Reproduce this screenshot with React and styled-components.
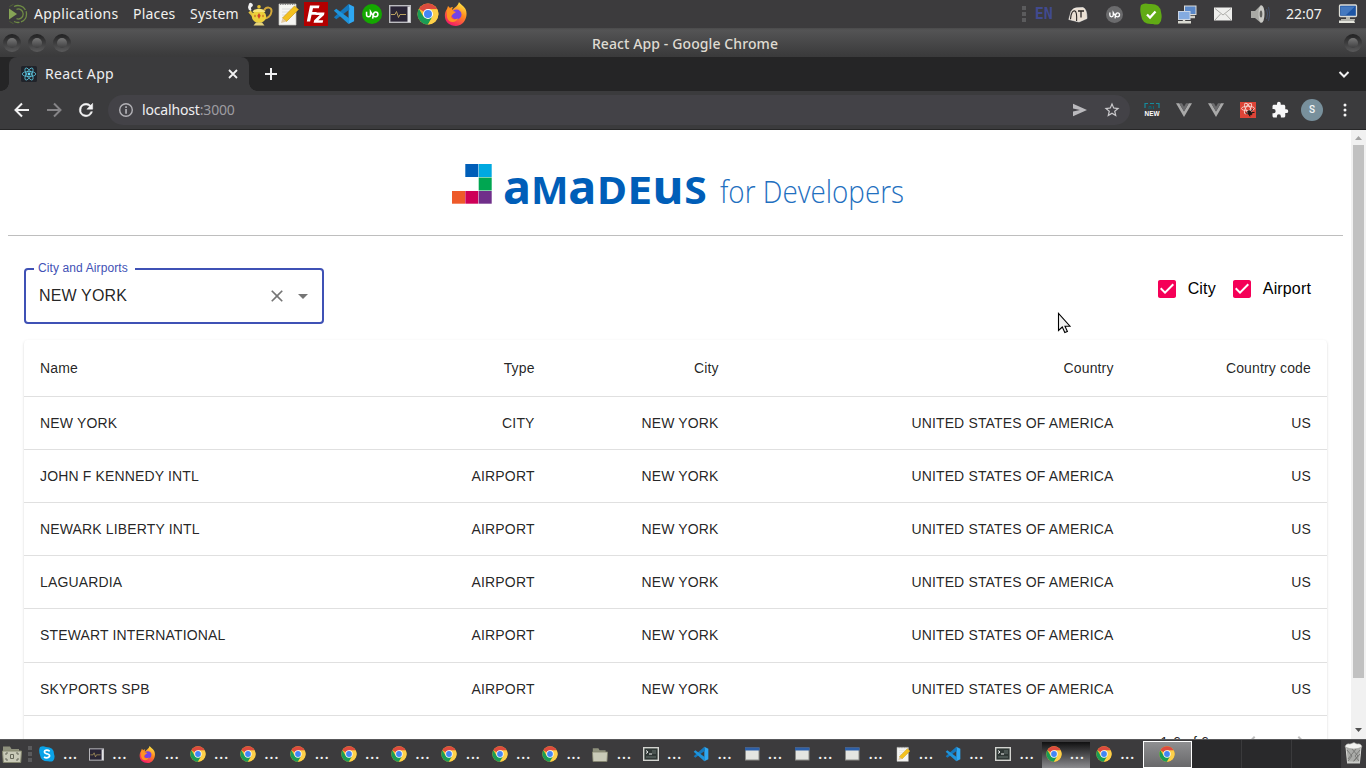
import React from "react";
import styled, { createGlobalStyle } from "styled-components";

const UI = `"Noto Sans", "Open Sans", sans-serif`;
const WEB = `"Liberation Sans", Arial, sans-serif`;

const GlobalStyle = createGlobalStyle`
  *, *::before, *::after { box-sizing: border-box; }
  html, body { margin: 0; padding: 0; overflow: hidden; }
  svg { display: block; flex: none; }
`;

const Desktop = styled.div`
  position: relative;
  width: 1366px;
  height: 768px;
  overflow: hidden;
  display: flex;
  flex-direction: column;
  background: #fff;
  font-family: ${UI};
`;

/* ---------- desktop panel ---------- */

const Panel = styled.header`
  height: 28px;
  flex: none;
  display: flex;
  align-items: center;
  background: #3c3b3d;
  color: #f2f1ef;
  padding-left: 6px;
`;

const MenuItem = styled.span`
  width: ${(p) => p.$w}px;
  font-size: 14px;
  line-height: 28px;
  letter-spacing: ${(p) => p.$ls || 0}px;
  white-space: nowrap;
`;

const MenuLogo = styled.div`
  width: 28px;
`;

const Cell = styled.div`
  width: ${(p) => p.$w || 28}px;
  height: 28px;
  flex: none;
  display: flex;
  align-items: center;
  justify-content: center;
`;

const Tray = styled.div`
  margin-left: auto;
  display: flex;
  align-items: center;
`;

const Lang = styled.span`
  width: 34px;
  padding-left: 9px;
  color: #414a8f;
  font: 700 15px/28px "DejaVu Sans Mono", monospace;
`;

const Clock = styled.span`
  width: 52px;
  padding-left: 8px;
  font-size: 14px;
  line-height: 28px;
  white-space: nowrap;
`;

/* ---------- browser window ---------- */

const TitleBar = styled.div`
  height: 29px;
  flex: none;
  display: flex;
  align-items: center;
  padding: 1px 4px 0 3px;
  background: linear-gradient(#4a4a4b 0, #545455 2px, #3d3d3e 25px, #3a3a3b 100%);
`;

const WindowButtons = styled.div`
  display: flex;
  gap: 7px;
  width: 68px;
`;

const WindowButton = styled.i`
  width: 18px;
  height: 18px;
  flex: none;
  border-radius: 50%;
  padding: 4px;
  background: linear-gradient(#212122, #5a5a5b);
  &::before {
    content: "";
    display: block;
    height: 10px;
    border-radius: 50%;
    background: linear-gradient(#777, #3f3f40);
  }
`;

const WindowTitle = styled.span`
  flex: 1;
  padding: 2px 45px 0 0;
  text-align: center;
  color: #dfdbd2;
  font-size: 14px;
  font-weight: 500;
  letter-spacing: 0.1px;
  line-height: 28px;
`;

const TabStrip = styled.div`
  height: 34px;
  flex: none;
  display: flex;
  align-items: center;
  background: #252526;
`;

const Tab = styled.div`
  position: relative;
  width: 240px;
  height: 34px;
  margin-left: 9px;
  padding: 0 11px 0 12px;
  display: flex;
  align-items: center;
  border-radius: 8px 8px 0 0;
  background: #3b3b3d;
  color: #eeeef0;
  &::before, &::after {
    content: "";
    position: absolute;
    bottom: 0;
    width: 8px;
    height: 8px;
  }
  &::before { left: -8px; background: radial-gradient(circle at 0 0, transparent 7.5px, #3b3b3d 8px); }
  &::after { right: -8px; background: radial-gradient(circle at 100% 0, transparent 7.5px, #3b3b3d 8px); }
`;

const TabTitle = styled.span`
  flex: 1;
  padding-left: 8px;
  font-size: 14px;
  letter-spacing: 0.33px;
  line-height: 34px;
`;

const NewTab = styled.div`
  padding-left: 15px;
  flex: 1;
`;

const TabSearch = styled.div`
  width: 29px;
`;

const Toolbar = styled.div`
  height: 39px;
  flex: none;
  display: flex;
  align-items: center;
  padding-left: 6px;
  background: #3b3b3d;
  border-bottom: 1px solid #262627;
`;

const Omnibox = styled.div`
  width: 1022px;
  height: 30px;
  margin: 0 6px 0 6px;
  padding: 0 2px 0 10px;
  display: flex;
  align-items: center;
  border-radius: 15px;
  background: #434247;
  color: #9d9ca1;
  font-size: 14px;
`;

const Address = styled.span`
  flex: 1;
  padding: 0 0 2px 8px;
  letter-spacing: -0.16px;
  b { font-weight: 400; color: #efeff1; }
`;

const Avatar = styled.div`
  width: 22px;
  height: 22px;
  border-radius: 50%;
  background: #78909c;
  color: #f4f6f7;
  text-align: center;
  font: 500 10px/22px Roboto, sans-serif;
`;

/* ---------- page ---------- */

const Viewport = styled.main`
  height: 609px;
  flex: none;
  display: flex;
  background: #fff;
  font-family: ${WEB};
  overflow: hidden;
`;

const Page = styled.div`
  width: 1351px;
  padding: 8px 8px 0;
`;

const Brand = styled.div`
  height: 98px;
  border-bottom: 1px solid #bebebe;
  display: flex;
  justify-content: center;
  padding: 12px 0 0 4px;
`;

const Controls = styled.div`
  display: flex;
  justify-content: space-between;
  align-items: flex-start;
  padding: 32px 32px 0 16px;
`;

const SelectBox = styled.fieldset`
  width: 300px;
  height: 61px;
  margin: -5px 0 0;
  padding: 0 7px 4px 13px;
  border: 2px solid #3f51b5;
  border-radius: 4px;
  display: flex;
  align-items: center;
  color: rgba(0, 0, 0, 0.87);
  font-size: 16px;
`;

const SelectLabel = styled.legend`
  margin-left: -5px;
  padding: 0 7px 0 4px;
  height: 11px;
  color: #3f51b5;
  font-size: 12px;
  line-height: 11px;
  letter-spacing: 0.11px;
`;

const SelectValue = styled.span`
  flex: 1;
  letter-spacing: 0.15px;
`;

const Adornments = styled.div`
  display: flex;
  align-items: center;
  gap: 4px;
`;

const Filters = styled.div`
  display: flex;
  gap: 17px;
  padding-top: 11px;
`;

const Filter = styled.label`
  display: flex;
  align-items: center;
  gap: 12px;
  height: 20px;
  font-size: 16px;
  letter-spacing: 0.15px;
  color: #000;
`;

const Paper = styled.section`
  margin: 16.08px 16px 0;
  border-radius: 4px;
  background: #fff;
  box-shadow: 0 2px 1px -1px rgba(0,0,0,.2), 0 1px 1px rgba(0,0,0,.14), 0 1px 3px rgba(0,0,0,.12);
  color: rgba(0, 0, 0, 0.87);
  font-size: 14px;
  letter-spacing: 0.15px;
`;

const Row = styled.div`
  display: grid;
  grid-template-columns: 342.6px 184px 184px 395px 197.4px;
  height: ${(p) => (p.$head ? 57 : 53.1)}px;
  align-items: center;
  border-bottom: 1px solid #e0e0e0;
`;

const DataCell = styled.span`
  padding: 0 16px 0.08px;
  text-align: ${(p) => (p.$first ? "left" : "right")};
  white-space: nowrap;
`;

const Pagination = styled.div`
  display: flex;
  justify-content: flex-end;
  align-items: center;
  height: 52px;
  padding-right: 14px;
  svg { margin-left: 25px; }
  span { margin-right: 6px; }
`;

const Scrollbar = styled.div`
  width: 15px;
  background: #f1f1f1;
  display: flex;
  flex-direction: column;
  align-items: center;
  padding: 6px 0 6px;
`;

const Thumb = styled.div`
  width: 11px;
  height: 533px;
  margin: 4px 0 auto;
  background: #c1c1c1;
`;

const Pointer = styled.div`
  position: absolute;
  left: 1057px;
  top: 312px;
`;

/* ---------- bottom task bar ---------- */

const TaskBar = styled.footer`
  height: 29px;
  flex: none;
  display: flex;
  align-items: center;
  background: #3c3b3d;
  border-top: 1px solid #58585a;
`;

const TaskLead = styled.div`
  width: 34.7px;
  display: flex;
  align-items: center;
  gap: 6px;
  padding-left: 2px;
`;

const Task = styled.div`
  width: 48.35px;
  height: 26px;
  margin: 1px 2px 0 0;
  padding: 0 0 1px 4px;
  display: flex;
  align-items: center;
  gap: 8.5px;
  color: #f4f4f4;
  background: ${(p) => (p.$alert ? "linear-gradient(#101011, #8b8b8e)" : "none")};
`;

const Dots = styled.span`
  font: 600 14px/24px ${UI};
  letter-spacing: 1.1px;
`;

const ActiveTask = styled.div`
  width: 49px;
  height: 27px;
  margin-left: 1px;
  padding: 0 1px 1px 0;
  display: flex;
  align-items: center;
  justify-content: center;
  border: 1px solid #fff;
  background: linear-gradient(#8f8f91, #68686a);
`;

const EmptySlot = styled.div`
  flex: 1;
  height: 28px;
  background: #29292b;
  border-right: 1px solid #3a3a3c;
`;

const Trash = styled.div`
  width: 24px;
  padding: 0 1px 2px 0;
  display: flex;
  justify-content: center;
`;

/* ---------- drawings ---------- */

const Chrome = ({ s = 16 }) => (
  <svg width={s} height={s} viewBox="0 0 48 48">
    <circle cx="24" cy="24" r="23" fill="#fbc02d" />
    <path d="M24 24 4.1 12.5A23 23 0 0 1 43.9 12.5L43.9 13.5H24Z" fill="#dd4b3e" />
    <path d="M4.1 12.5A23 23 0 0 0 24 47L34 29.7 24 24 14 29.5Z" fill="#1a9c55" />
    <path d="M43.9 13.5H24L34 29.7 24 47A23 23 0 0 0 43.9 13.5Z" fill="#fdd04a" />
    <circle cx="24" cy="24" r="11" fill="#fff" />
    <circle cx="24" cy="24" r="8.7" fill="#4386f5" />
  </svg>
);

const Firefox = ({ s = 17 }) => (
  <svg width={s} height={s} viewBox="0 0 24 24">
    <defs>
      <linearGradient id="fx" x1=".8" y1="0" x2=".3" y2="1">
        <stop offset="0" stopColor="#fff04a" />
        <stop offset=".45" stopColor="#ff8a1e" />
        <stop offset="1" stopColor="#f5156c" />
      </linearGradient>
    </defs>
    <path d="M15 0c1 2 5 4 6.500 7 3 6-.5 17-9.500 17C5 24 0 19 1 12c.3-2 1-4 2-5l1-3 2 2c1-1 2-1 3-1-.8 1-1 2-.8 3C11 5 14 4 15 0Z" fill="url(#fx)" />
    <circle cx="12.500" cy="12.500" r="5" fill="#7542e5" />
    <path d="M3 7c3-1 5 0 6 2l3 1-3 2c-1 2-2 1-2 3 1 3 5 3 7 1-2 6-10 5-11-1Z" fill="#ff9221" />
  </svg>
);

const VsCode = ({ s = 16 }) => (
  <svg width={s} height={s} viewBox="0 0 24 24">
    <path d="M17 1 23 4V20L17 23Z" fill="#2ea7f2" />
    <path d="M17 1 1 15.500 3.500 17.700 18 7Z" fill="#1478bd" />
    <path d="M17 23 1 8.500 3.500 6.300 18 17Z" fill="#1e94dc" />
  </svg>
);

const Note = ({ s = 16 }) => (
  <svg width={s} height={s} viewBox="0 0 24 24">
    <path d="M3 2h17v21H3Z" fill="#f5f5f2" stroke="#c4c4c0" strokeWidth=".7" />
    <path d="M4 2.500h15" stroke="#888" strokeWidth="1.200" strokeDasharray="1.200 1.200" />
    <path d="M6 7h9M6 10h7M6 13h4" stroke="#dcdcdc" />
    <path d="M18.500 4 22.500 7.500 10.500 19.500 6.500 16Z" fill="#f3c11f" stroke="#c99a1a" strokeWidth=".7" />
    <path d="M6.500 16 5 21l5.500-1.500Z" fill="#e3c9a0" />
  </svg>
);

const Monitor = ({ w = 15, h = 13 }) => (
  <svg width={w} height={h} viewBox="0 0 22 18">
    <rect x=".7" y=".7" width="20.600" height="16.600" fill="#2a2536" stroke="#bcbcc0" strokeWidth="1.400" />
    <rect x="18.500" y="1.500" width="2.500" height="15.500" fill="#e4e4e6" />
    <path d="M2 9.500h4l1.500-3 2 6 1.500-3h6" fill="none" stroke="#b8a060" />
  </svg>
);

const Teapot = () => (
  <svg width="26" height="24" viewBox="0 0 26 24">
    <path d="M3.500 9Q0 7 1.500 3.500 2-.5 5 1.500 7 3.500 4.500 5 3.500 6 4.500 8Z" fill="#f1f1f1" />
    <path d="M17 8.500c2-4 8-4 7.500 1-.5 4.500-4 7-7.500 7" fill="none" stroke="#d3a83a" strokeWidth="2" />
    <path d="M7.500 15 2.500 9.500" stroke="#e4c23d" strokeWidth="3" />
    <ellipse cx="12" cy="14.500" rx="7.200" ry="6.500" fill="#ecd03c" />
    <path d="M6.500 23.500h11l-2.500-3H9Z" fill="#e6d37c" />
    <path d="M5.500 10c2-4.500 11-4.500 13 0Z" fill="#f7e57b" />
    <circle cx="12" cy="4.800" r="1.800" fill="#e8c22f" />
    <path d="m12 11 1.700 2.700L12 17l-1.700-3.300Z" fill="#d1442a" />
    <path d="m8 12.500 1 1.500-1 1.500-1-1.500ZM16 12.500l1 1.500-1 1.500-1-1.500Z" fill="#c9702a" />
  </svg>
);

const FileZilla = () => (
  <svg width="24" height="24" viewBox="0 0 24 24">
    <rect width="24" height="24" fill="#b30000" />
    <path d="M6 3.500h9.500l-.7 2.800H9l-.8 3.700h4.500l-.6 2.800H7.600L6.100 19.500H2.800Z" fill="#fff" />
    <path d="M12 10.500h8.500l-.5 2.500-5.700 5.200h4.900l-.6 2.600H9.600l.6-2.500 5.500-5.200h-4.200Z" fill="#fff" />
  </svg>
);

const upPath = "M5 8.500v3.300a2.200 2.200 0 0 0 4.400 0V8.500l1.500 2.500c.8 1.500 2 3 4 3a2.600 2.600 0 0 0 0-5.200c-2.200 0-2.500 2-3.200 7.200";
const Upwork = ({ s, bg }) => (
  <svg width={s} height={s} viewBox="0 0 22 22">
    <circle cx="11" cy="11" r="11" fill={bg} />
    <path d={upPath} fill="none" stroke="#fff" strokeWidth="1.700" />
  </svg>
);

const MateLogo = () => (
  <svg width="22" height="22" viewBox="0 0 22 22" fill="none">
    <path d="M3 5.500 11 11l-8 5.500Z" fill="#87a556" />
    <path d="M8 3.500A8.500 8.500 0 1 1 8 18.500" stroke="#6f8c45" strokeWidth="1.300" strokeDasharray="13 1.500" />
    <path d="M10.500 6.300a5 5 0 1 1 0 9.400" stroke="#6f8c45" strokeWidth="1.300" />
    <path d="M3.500 3.500 7.500 1.300M3.500 18.500l4 2.200" stroke="#4f6135" />
  </svg>
);

const Mailbox = () => (
  <svg width="20" height="17" viewBox="0 0 20 17">
    <path d="M.8 13.500 3 5.500Q5 2 8.500 1.800L15 1.500Q19 3 19 12.500l-8 3.500Z" fill="#eadfd3" stroke="#fff" strokeWidth=".5" />
    <path d="M2.500 13.200C3 6 5 4.500 7 5 9 6 8.800 11 8.600 15" fill="none" stroke="#2a2625" strokeWidth="1.100" />
    <path d="M10 5h6M13 5v6.500" fill="none" stroke="#2a2625" strokeWidth="1.300" />
  </svg>
);

const SkypeStatus = () => (
  <svg width="22" height="22" viewBox="0 0 22 22">
    <path d="M1 2Q4-.5 9 1q11-1 12 8 2 8-2 12-3 1-6 0Q2 22 1 12-.5 6 1 2Z" fill="#61ab15" />
    <path d="m7 11.500 3 3 5.500-6" fill="none" stroke="#fff" strokeWidth="2.300" />
  </svg>
);

const Network = () => (
  <svg width="20" height="19" viewBox="0 0 20 19">
    <rect x="7.500" y="1" width="11.500" height="8.500" fill="#5a88c8" stroke="#dcdcd8" />
    <path d="M9 12h9" stroke="#cfcfc8" strokeWidth="2.500" />
    <rect x="1.500" y="6.500" width="11.500" height="8" fill="#84abe0" stroke="#c7d3e4" />
    <path d="M1 17.300h13M7 14.500v2" stroke="#d8d8d0" strokeWidth="2.400" />
  </svg>
);

const Mail = () => (
  <svg width="18" height="14" viewBox="0 0 18 14">
    <rect width="18" height="13" y=".5" fill="#eeeeec" />
    <path d="M1 1.500 9 8l8-6.500M1 13l5.500-6M17 13l-5.500-6" fill="none" stroke="#a2a29e" strokeWidth=".9" />
  </svg>
);

const Speaker = () => (
  <svg width="20" height="20" viewBox="0 0 20 20">
    <path d="M1 7h4l6-6q4 9 0 18l-6-5H1Z" fill="#a9a9a5" />
    <ellipse cx="11.500" cy="10" rx="3" ry="8.800" fill="#c9c9c5" />
    <ellipse cx="11" cy="10" rx="1.300" ry="3.500" fill="#60605e" />
    <path d="M16.500 5q2 5 0 10M18.500 3q2.500 7 0 14" fill="none" stroke="#46536c" />
  </svg>
);

const Computer = () => (
  <svg width="20" height="20" viewBox="0 0 20 20">
    <rect x="1.500" y="1" width="17" height="11.500" rx="1" fill="#1e56a5" stroke="#dcdcd6" strokeWidth="1.300" />
    <path d="M3 2.500h14L8 11H3Z" fill="#4479c0" />
    <path d="M8 13h4v2H8zM3 15h14v1.500H3Z" fill="#b6b6ae" />
    <path d="M1 16.500h15l1 2.500H1Z" fill="#e4e4dc" />
  </svg>
);

const Grip = () => (
  <svg width="4" height="18" viewBox="0 0 4 18">
    <path d="M0 1h4v4H0zM0 7h4v4H0zM0 13h4v4H0z" fill="#5b5b5d" />
  </svg>
);

const ReactFavicon = () => (
  <svg width="16" height="16" viewBox="0 0 16 16">
    <rect width="16" height="16" rx="1.500" fill="#20232a" />
    <g fill="none" stroke="#5bc3dc" strokeWidth=".8">
      <ellipse cx="8" cy="8" rx="6.800" ry="2.600" />
      <ellipse cx="8" cy="8" rx="6.800" ry="2.600" transform="rotate(60 8 8)" />
      <ellipse cx="8" cy="8" rx="6.800" ry="2.600" transform="rotate(120 8 8)" />
    </g>
    <circle cx="8" cy="8" r="1.400" fill="#61dafb" />
  </svg>
);

const Stroke = ({ s = 20, d, c = "#f1f1f2", w = 2 }) => (
  <svg width={s} height={s} viewBox={`0 0 ${s} ${s}`} fill="none" stroke={c} strokeWidth={w}>
    <path d={d} />
  </svg>
);

const Reload = () => (
  <svg width="20" height="20" viewBox="0 0 24 24" fill="#f4f4f5">
    <path d="M17.650 6.350A7.950 7.950 0 0 0 12 4a8 8 0 1 0 7.730 10h-2.080A6 6 0 1 1 12 6c1.660 0 3.140.69 4.220 1.780L13 11h7V4z" stroke="#f4f4f5" strokeWidth=".6" />
  </svg>
);

const Info = () => (
  <svg width="16" height="16" viewBox="0 0 16 16">
    <circle cx="8" cy="8" r="6.300" fill="none" stroke="#b2b1b6" strokeWidth="1.400" />
    <path d="M7.200 4.300h1.700v1.700H7.200zM7.200 7h1.700v4.700H7.200z" fill="#b2b1b6" />
  </svg>
);

const Send = () => (
  <svg width="16" height="14" viewBox="0 0 16 14" fill="#bab9bd">
    <path d="M1 .8 15 7 1 13.200V8.500L8 7 1 5.500Z" />
  </svg>
);

const Star = () => (
  <svg width="18" height="18" viewBox="0 0 24 24" fill="#cbcacd">
    <path d="M22 9.240l-7.190-.62L12 2 9.190 8.630 2 9.240l5.460 4.730L5.820 21 12 17.270 18.180 21l-1.630-7.030L22 9.240zM12 15.400l-3.760 2.270 1-4.280-3.320-2.880 4.380-.38L12 6.100l1.710 4.040 4.380.38-3.320 2.880 1 4.280L12 15.400z" />
  </svg>
);

const NewExt = () => (
  <svg width="16" height="20" viewBox="0 -2 16 20">
    <path d="M1 6V1.500h3M6 1.500h4M12 1.500h3V6" fill="none" stroke="#168a9c" strokeWidth="1.200" />
    <path d="M5 7V4.500h2V7M9.500 4v3" fill="none" stroke="#0d6572" />
    <text x="0.500" y="13.800" textLength="15" lengthAdjust="spacingAndGlyphs" fontFamily="Liberation Sans, sans-serif" fontWeight="700" fontSize="7.500" fill="#fff">NEW</text>
  </svg>
);

const Vue = () => (
  <svg width="16" height="14" viewBox="0 0 16 14">
    <path d="M0 .3h3.200L8 8.600 12.800.3H16L8 14Z" fill="#a9a9a9" />
    <path d="M3.200.3H6L8 3.800 10 .3h2.800L8 8.600Z" fill="#6d6d6f" />
  </svg>
);

const RedExt = () => (
  <svg width="16" height="16" viewBox="0 0 16 16">
    <rect width="16" height="16" fill="#dd4437" />
    <g fill="none" stroke="#f7d9d5" strokeWidth=".9">
      <ellipse cx="8" cy="6.500" rx="6.500" ry="2.300" />
      <ellipse cx="8" cy="6.500" rx="5.800" ry="2.300" transform="rotate(60 8 6.500)" />
      <ellipse cx="8" cy="6.500" rx="5.800" ry="2.300" transform="rotate(120 8 6.500)" />
    </g>
    <path d="M7 9.500 9 8l2.500 1.500 1 2.500-1.500 1.500-3-1Z" fill="#231816" />
    <path d="m5.500 11 2 .5M10 14.500l-1-2M11 8.500l2-1M12 10.500h2.500" stroke="#231816" />
  </svg>
);

const Puzzle = () => (
  <svg width="18" height="18" viewBox="0 0 24 24" fill="#f7f7f8">
    <path d="M20.500 11H19V7c0-1.100-.9-2-2-2h-4V3.500a2.500 2.500 0 0 0-5 0V5H4c-1.100 0-1.990.9-1.990 2v3.800H3.500a2.700 2.700 0 0 1 0 5.400H2V20c0 1.100.9 2 2 2h3.800v-1.500a2.700 2.700 0 0 1 5.400 0V22H17c1.100 0 2-.9 2-2v-4h1.500a2.500 2.500 0 0 0 0-5z" />
  </svg>
);

const Kebab = () => (
  <svg width="4" height="16" viewBox="0 0 4 16" fill="#f4f4f5">
    <circle cx="2" cy="3" r="1.500" /><circle cx="2" cy="8" r="1.500" /><circle cx="2" cy="13" r="1.500" />
  </svg>
);

const letter = { lengthAdjust: "spacingAndGlyphs" };
const AmadeusLogo = () => (
  <svg width="456" height="80" viewBox="450 150 456 80">
    <rect x="465.300" y="164" width="13" height="13" fill="#005eb8" />
    <rect x="478.700" y="164" width="13" height="13" fill="#00a9e0" />
    <rect x="478.700" y="177.500" width="13" height="13" fill="#00a651" />
    <rect x="452" y="191" width="13" height="12.700" fill="#ee5a2a" />
    <rect x="465.300" y="191" width="13" height="12.700" fill="#ce0058" />
    <rect x="478.700" y="191" width="13" height="12.700" fill="#702f8a" />
    <text y="204.300" fontFamily="'Noto Sans', 'Open Sans', sans-serif" fontWeight="700" fill="#005eb8">
      <tspan x="503" fontSize="46" textLength="28" {...letter}>a</tspan>
      <tspan x="531" fontSize="38" textLength="37.500" {...letter}>M</tspan>
      <tspan x="568.200" fontSize="46" textLength="28" {...letter}>a</tspan>
      <tspan x="597" fontSize="38" textLength="30" {...letter}>D</tspan>
      <tspan x="627.300" fontSize="38" textLength="25" {...letter}>E</tspan>
      <tspan x="652.500" fontSize="46" textLength="31" {...letter}>u</tspan>
      <tspan x="684.300" fontSize="38" textLength="22.500" {...letter}>S</tspan>
    </text>
    <text x="720" y="203" fontFamily="'Open Sans', 'Noto Sans', sans-serif" fontWeight="300" fontSize="30.500" fill="#1f70c0" textLength="184" {...letter}>for Developers</text>
  </svg>
);

const Clear = () => (
  <svg width="20" height="20" viewBox="0 0 24 24" fill="rgba(0,0,0,.54)">
    <path d="M19 6.410L17.590 5 12 10.590 6.410 5 5 6.410 10.590 12 5 17.590 6.410 19 12 13.410 17.590 19 19 17.590 13.410 12z" />
  </svg>
);

const Material = ({ d, c }) => (
  <svg width="24" height="24" viewBox="0 0 24 24" fill={c}><path d={d} /></svg>
);

const CheckBox = () => (
  <svg width="18" height="18" viewBox="3 3 18 18" fill="#f50057">
    <path d="M19 3H5c-1.110 0-2 .9-2 2v14c0 1.100.89 2 2 2h14c1.110 0 2-.9 2-2V5c0-1.100-.89-2-2-2zm-9 14l-5-5 1.410-1.410L10 14.170l7.590-7.590L19 8l-9 9z" />
  </svg>
);

const ScrollArrow = ({ up }) => (
  <svg width="7" height="5" viewBox="0 0 7 5">
    <path d={up ? "M3.500 0 7 4H0Z" : "M0 0h7L3.500 4Z"} fill={up ? "#a3a3a3" : "#505050"} />
  </svg>
);

const Arrow = () => (
  <svg width="14" height="22" viewBox="0 0 14 22">
    <path d="M1.500 1.500v17l3.800-3.500 2.500 5.500 2.600-1.100-2.400-5.200h5Z" fill="#f1f1f1" stroke="#000" strokeWidth="1.100" />
  </svg>
);

const Skype = () => (
  <svg width="16" height="16" viewBox="0 0 16 16">
    <path d="M1 1q3-1.500 6 0 8 0 8 7 1.500 4-1 7-2 1-5 .3Q2 15.500 1 9-.7 4 1 1Z" fill="#0aa3e8" />
    <path d="M10.700 5.200Q8 3.300 5.800 4.800 4.500 7 8 7.800 12 9 10 11 7.500 12.800 5 11" fill="none" stroke="#fff" strokeWidth="1.700" />
  </svg>
);

const Folder = ({ desk }) => (
  <svg width={desk ? 20 : 16} height={desk ? 18 : 15} viewBox="0 0 20 18" preserveAspectRatio="none">
    <path d="M1 1.500h7l1.500 2.500H17v3H1Z" fill="#8f917d" />
    <path d="M.5 6h19l-.8 11.500H1.300Z" fill="#c9cab8" stroke="#84866f" />
    {desk && <path d="M4 10V8h2M14 8h2v2M16 13v2h-2M6 15H4v-2M8.500 9.500h3v4h-3Z" fill="none" stroke="#66685a" />}
  </svg>
);

const Terminal = () => (
  <svg width="16" height="14" viewBox="0 0 16 14">
    <rect x=".7" y=".7" width="14.600" height="12.600" fill="#2f3735" stroke="#d3d4d0" strokeWidth="1.400" />
    <path d="M3 3.500 5 5 3 6.500M6 7h3" fill="none" stroke="#f0f0f0" />
    <path d="M3 9h10v2H3zM9 3h4v4H9z" fill="#4b5552" />
  </svg>
);

const Win = () => (
  <svg width="16" height="14" viewBox="0 0 16 14">
    <rect x="1.500" y="1" width="13.500" height="12" fill="#e4e5e1" stroke="#8b8c88" />
    <path d="M1 .5h14.500v3H1Z" fill="#2c5fa8" />
  </svg>
);

const Bin = () => (
  <svg width="19" height="22" viewBox="0 0 19 22">
    <path d="M2 5h15l-1.500 15.500h-12Z" fill="#aaaba8" stroke="#d8d8d5" />
    <path d="M3 8l5 6-4 5M8 7l6 7-5 6M12 7l-8 10M16 8l-5 6 4 5M16 12l-7 8" fill="none" stroke="#6e6f6c" strokeWidth=".8" />
    <path d="M1 5q1-4 5-3l4-1.500L13 2q4-1 5 3-8 4-17 0Z" fill="#f2f2f0" stroke="#9a9a97" strokeWidth=".6" />
    <path d="M3 19.500h13v2H3Z" fill="#cbccc9" />
  </svg>
);

/* ---------- data ---------- */

const head = ["Name", "Type", "City", "Country", "Country code"];
const rows = [
  ["NEW YORK", "CITY"],
  ["JOHN F KENNEDY INTL", "AIRPORT"],
  ["NEWARK LIBERTY INTL", "AIRPORT"],
  ["LAGUARDIA", "AIRPORT"],
  ["STEWART INTERNATIONAL", "AIRPORT"],
  ["SKYPORTS SPB", "AIRPORT"],
].map(([name, type]) => [name, type, "NEW YORK", "UNITED STATES OF AMERICA", "US"]);

const tasks = [
  Skype, Monitor, Firefox, Chrome, Chrome, Chrome, Chrome, Chrome, Chrome, Chrome, Chrome,
  Folder, Terminal, VsCode, Win, Win, Win, Note, VsCode, Terminal, Chrome, Chrome,
];

const launchers = [
  <Teapot />, <Note s={24} />, <FileZilla />, <VsCode s={22} />, <Upwork s={20} bg="#14a800" />,
  <Monitor w={22} h={18} />, <Chrome s={22} />, <Firefox s={24} />,
];

const trayIcons = [
  <Mailbox />, <Upwork s={17} bg="#6b6b6d" />, <SkypeStatus />, <Network />, <Mail />, <Speaker />,
];

export default function App() {
  return (
    <>
      <GlobalStyle />
      <Desktop>
        <Panel>
          <MenuLogo><MateLogo /></MenuLogo>
          <MenuItem $w={99} $ls={0.34}>Applications</MenuItem>
          <MenuItem $w={57} $ls={0.2}>Places</MenuItem>
          <MenuItem $w={56} $ls={0.2}>System</MenuItem>
          {launchers.map((icon, i) => <Cell key={i}>{icon}</Cell>)}
          <Tray>
            <Cell $w={4}><Grip /></Cell>
            <Lang>EN</Lang>
            {trayIcons.map((icon, i) => <Cell key={i} $w={36.4}>{icon}</Cell>)}
            <Clock>22:07</Clock>
            <Cell $w={36}><Computer /></Cell>
          </Tray>
        </Panel>

        <TitleBar>
          <WindowButtons><WindowButton /><WindowButton /><WindowButton /></WindowButtons>
          <WindowTitle>React App - Google Chrome</WindowTitle>
          <WindowButton />
        </TitleBar>

        <TabStrip>
          <Tab>
            <ReactFavicon />
            <TabTitle>React App</TabTitle>
            <Stroke s={10} d="M1 1l8 8M9 1l-8 8" w={1.8} />
          </Tab>
          <NewTab><Stroke s={14} d="M7 1v12M1 7h12" w={2} /></NewTab>
          <TabSearch><Stroke s={14} d="M2.500 5l4.500 4.500L11.500 5" w={2} /></TabSearch>
        </TabStrip>

        <Toolbar>
          <Cell $w={32}><Stroke s={16} d="M15 8H2M8 1.500 1.500 8 8 14.500" /></Cell>
          <Cell $w={32}><Stroke s={16} c="#858487" d="M1 8h13M8 1.500 14.500 8 8 14.500" /></Cell>
          <Cell $w={32}><Reload /></Cell>
          <Omnibox>
            <Info />
            <Address><b>localhost</b>:3000</Address>
            <Cell $w={32}><Send /></Cell>
            <Cell $w={32}><Star /></Cell>
          </Omnibox>
          <Cell $w={32}><NewExt /></Cell>
          <Cell $w={32}><Vue /></Cell>
          <Cell $w={32}><Vue /></Cell>
          <Cell $w={32}><RedExt /></Cell>
          <Cell $w={32}><Puzzle /></Cell>
          <Cell $w={32}><Avatar>S</Avatar></Cell>
          <Cell $w={33}><Kebab /></Cell>
        </Toolbar>

        <Viewport>
          <Page>
            <Brand><AmadeusLogo /></Brand>
            <Controls>
              <SelectBox>
                <SelectLabel>City and Airports</SelectLabel>
                <SelectValue>NEW YORK</SelectValue>
                <Adornments>
                  <Clear />
                  <Material d="M7 10l5 5 5-5z" c="rgba(0,0,0,.54)" />
                </Adornments>
              </SelectBox>
              <Filters>
                <Filter><CheckBox />City</Filter>
                <Filter><CheckBox />Airport</Filter>
              </Filters>
            </Controls>
            <Paper>
              <Row $head>
                {head.map((t, i) => <DataCell key={t} $first={i === 0}>{t}</DataCell>)}
              </Row>
              {rows.map((r) => (
                <Row key={r[0]}>
                  {r.map((t, i) => <DataCell key={i} $first={i === 0}>{t}</DataCell>)}
                </Row>
              ))}
              <Pagination>
                <span>1-6 of 6</span>
                <Material d="M15.410 7.410L14 6l-6 6 6 6 1.410-1.410L10.830 12z" c="rgba(0,0,0,.26)" />
                <Material d="M10 6L8.590 7.410 13.170 12l-4.580 4.590L10 18l6-6z" c="rgba(0,0,0,.26)" />
              </Pagination>
            </Paper>
          </Page>
          <Scrollbar>
            <ScrollArrow up />
            <Thumb />
            <ScrollArrow />
          </Scrollbar>
        </Viewport>

        <TaskBar>
          <TaskLead><Folder desk /><Grip /></TaskLead>
          {tasks.map((Icon, i) => (
            <Task key={i} $alert={i === 20}><Icon /><Dots>...</Dots></Task>
          ))}
          <ActiveTask><Chrome /></ActiveTask>
          <EmptySlot /><EmptySlot /><EmptySlot />
          <Trash><Bin /></Trash>
        </TaskBar>

        <Pointer><Arrow /></Pointer>
      </Desktop>
    </>
  );
}
